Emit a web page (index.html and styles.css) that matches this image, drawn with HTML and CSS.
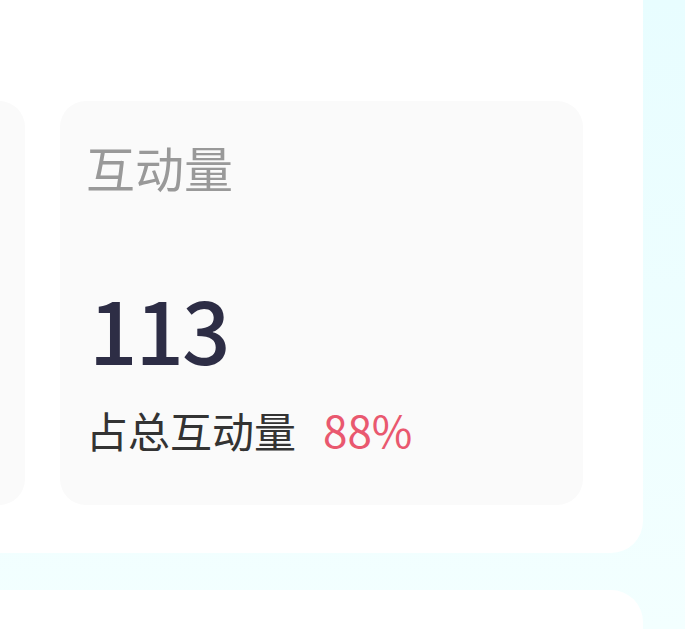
FILE: index.html
```html
<!DOCTYPE html>
<html lang="zh">
<head>
<meta charset="utf-8">
<link rel="stylesheet" href="styles.css">
</head>
<body>
<div class="page">
  <section class="panel panel-top">
    <div class="cards">
      <div class="card card-prev"></div>
      <div class="card">
        <div class="card-title">互动量</div>
        <div class="card-value">113</div>
        <div class="card-foot">
          <span class="foot-label">占总互动量</span>
          <span class="foot-pct">88%</span>
        </div>
      </div>
    </div>
  </section>
  <section class="panel panel-bottom"></section>
</div>
</body>
</html>
```
FILE: styles.css
```css
html, body {
  margin: 0;
  padding: 0;
}
body {
  width: 685px;
  height: 629px;
  overflow: hidden;
  background: linear-gradient(180deg, #e8fdff 0%, #f3ffff 100%);
  font-family: "Noto Sans CJK SC", "Noto Sans", sans-serif;
}
.page {
  display: flex;
  flex-direction: column;
  gap: 37px;
}
.panel {
  width: 643px;
  background: #ffffff;
}
.panel-top {
  height: 553px;
  border-bottom-right-radius: 32px;
  box-sizing: border-box;
  padding-top: 101px;
}
.panel-bottom {
  height: 39px;
  border-top-right-radius: 32px;
}
.cards {
  display: flex;
  gap: 35px;
  margin-left: -498px;
}
.card {
  flex: 0 0 523px;
  height: 404px;
  box-sizing: border-box;
  background: #fafafa;
  border-radius: 26px;
  padding: 37px 26px 0;
  display: flex;
  flex-direction: column;
}
.card-title {
  font-size: 49px;
  line-height: 58px;
  color: #999999;
}
.card-value {
  margin-top: 82px;
  margin-left: 3px;
  font-size: 85px;
  line-height: 100px;
  color: #2d2d45;
  font-weight: 500;
  letter-spacing: -2px;
}
.card-foot {
  margin-top: 23px;
  display: flex;
  align-items: baseline;
  gap: 27px;
  line-height: 56px;
}
.foot-label {
  font-size: 42px;
  color: #333333;
}
.foot-pct {
  font-size: 44px;
  color: #e9586f;
}
```
